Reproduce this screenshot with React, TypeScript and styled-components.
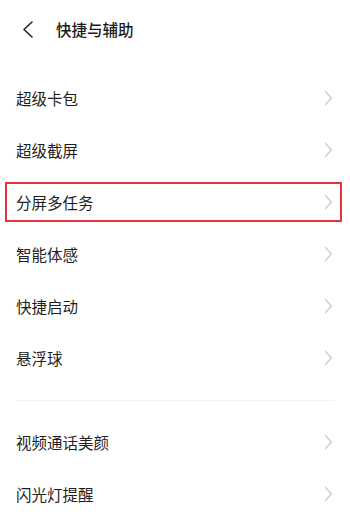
import { createGlobalStyle } from "styled-components";
import styled from "styled-components";

const GlobalStyle = createGlobalStyle`
  body {
    margin: 0;
    background: #fff;
    font-family: Roboto, "Noto Sans CJK SC", sans-serif;
    color: #1f1f1f;
  }
`;

const Page = styled.div`
  width: 350px;
  min-height: 529px;
  background: #fff;
`;

const Header = styled.div`
  height: 58px;
  display: flex;
  align-items: center;
  padding-left: 22px;
  gap: 22px;
`;

const Title = styled.h1`
  margin: 0;
  font-size: 15.5px;
  font-weight: 500;
  color: #1a1a1a;
`;

const Section = styled.div<{ $first?: boolean }>`
  padding-top: ${(p) => (p.$first ? "14px" : "15px")};
  padding-bottom: ${(p) => (p.$first ? "16px" : "0")};
`;

const Divider = styled.div`
  height: 1px;
  margin: 0 15px 0 16px;
  background: #f2f2f2;
`;

const Row = styled.div<{ $marked?: boolean }>`
  position: relative;
  height: 52px;
  display: flex;
  align-items: center;
  justify-content: space-between;
  padding: 0 17px 0 16px;
  font-size: 15.5px;
  color: #1f1f1f;

  ${(p) =>
    p.$marked &&
    `
    &::after {
      content: "";
      position: absolute;
      left: 5px;
      right: 8px;
      top: 6px;
      bottom: 6px;
      border: 2px solid #e5323b;
      pointer-events: none;
    }
  `}
`;

const Back = () => (
  <svg width="12" height="17" viewBox="0 0 12 17" fill="none">
    <polyline
      points="10,1 2,8.5 10,16"
      stroke="#222"
      strokeWidth="1.6"
      strokeLinecap="round"
      strokeLinejoin="round"
    />
  </svg>
);

const Chevron = () => (
  <svg width="9" height="16" viewBox="0 0 9 16" fill="none">
    <polyline
      points="1.5,1.5 7.5,8 1.5,14.5"
      stroke="#cdcdcd"
      strokeWidth="1.3"
      strokeLinecap="round"
      strokeLinejoin="round"
    />
  </svg>
);

const first = ["超级卡包", "超级截屏", "分屏多任务", "智能体感", "快捷启动", "悬浮球"];
const second = ["视频通话美颜", "闪光灯提醒"];

export default function App() {
  return (
    <Page>
      <GlobalStyle />
      <Header>
        <Back />
        <Title>快捷与辅助</Title>
      </Header>
      <Section $first>
        {first.map((label) => (
          <Row key={label} $marked={label === "分屏多任务"}>
            <span>{label}</span>
            <Chevron />
          </Row>
        ))}
      </Section>
      <Divider />
      <Section>
        {second.map((label) => (
          <Row key={label}>
            <span>{label}</span>
            <Chevron />
          </Row>
        ))}
      </Section>
    </Page>
  );
}
